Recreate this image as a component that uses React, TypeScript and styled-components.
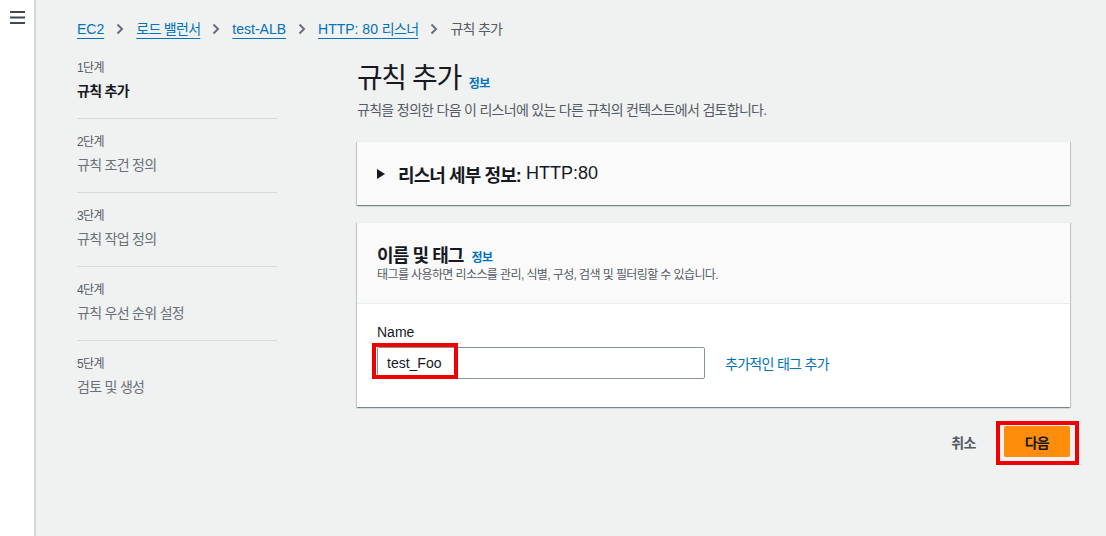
import React from 'react'
import styled, { createGlobalStyle } from 'styled-components'

// Hangul in the reference is set in a narrower face than Noto CJK
const hangul = `letter-spacing: -0.05em;`

const GlobalStyle = createGlobalStyle`
    html, body {
        margin: 0;
        padding: 0;
        height: 100%;
    }
    body {
        font-family: "Liberation Sans", "Noto Sans CJK KR", sans-serif;
        color: #16191f;
        background: #f0f1f1;
    }
`

const Page = styled.div`
    display: flex;
    min-height: 100vh;
`

const NavRail = styled.div`
    width: 36px;
    flex-shrink: 0;
    background: #ffffff;
    border-right: 2px solid #d3d6d6;
    display: flex;
    justify-content: center;
    padding-top: 11px;
    box-sizing: border-box;
`

const Main = styled.main`
    flex: 1;
    padding: 18px 36px 0 41px;
`

const Breadcrumbs = styled.nav`
    display: flex;
    align-items: center;
    font-size: 14px;
    line-height: 22px;
`

const Crumb = styled.a`
    color: #0073bb;
    text-decoration: underline;
    text-underline-offset: 4px;
    text-decoration-thickness: 1px;
`

const Ko = styled.span`
    ${hangul}
`

const CrumbCurrent = styled.span`
    color: #545b64;
    ${hangul}
`

const Chevron = styled.span`
    display: flex;
    align-items: center;
    padding: 0 12px;
    color: #687078;
`

const Layout = styled.div`
    display: grid;
    grid-template-columns: 200px 1fr;
    column-gap: 80px;
    margin-top: 19px;
`

const Steps = styled.ol`
    list-style: none;
    margin: 1px 0 0;
    padding: 0;
`

const Step = styled.li`
    padding: 15px 0 16px;
    border-bottom: 1px solid #d5dbdb;

    &:first-child {
        padding-top: 0;
    }
    &:last-child {
        border-bottom: none;
    }
`

const StepLabel = styled.div`
    font-size: 12px;
    line-height: 16px;
    color: #545b64;
    margin-bottom: 4px;
    ${hangul}
`

const StepTitle = styled.div<{ active?: boolean }>`
    font-size: 14px;
    line-height: 22px;
    color: ${p => (p.active ? '#16191f' : '#687078')};
    font-weight: ${p => (p.active ? 700 : 400)};
    ${hangul}
`

const Content = styled.section`
    display: flex;
    flex-direction: column;
`

const TitleRow = styled.div`
    display: flex;
    align-items: baseline;
    margin-top: 2px;
`

const PageTitle = styled.h1`
    margin: 0;
    font-size: 28px;
    line-height: 36px;
    font-weight: 400;
    color: #16191f;
    ${hangul}
`

const InfoLink = styled.a`
    margin-left: 8px;
    font-size: 12px;
    font-weight: 700;
    color: #0073bb;
    ${hangul}
`

const PageDesc = styled.p`
    margin: 2px 0 20px;
    font-size: 14px;
    line-height: 22px;
    color: #545b64;
    ${hangul}
`

const Card = styled.div`
    background: #ffffff;
    box-shadow: 0 1px 1px 0 rgba(0, 28, 36, 0.3), 1px 1px 1px 0 rgba(0, 28, 36, 0.15),
        -1px 1px 1px 0 rgba(0, 28, 36, 0.15);
    border-top: 1px solid #eaeded;
    margin-bottom: 17px;
`

const ExpandHeader = styled.div`
    display: flex;
    align-items: center;
    height: 63px;
    padding: 0 20px;
    background: #fafafa;
    font-size: 18px;
`

const Caret = styled.span`
    display: flex;
    width: 21px;
`

const Bold = styled.span`
    font-weight: 700;
    margin-right: 5px;
    ${hangul}
`

const CardHeader = styled.div`
    background: #fafafa;
    padding: 22px 20px 20px;
    border-bottom: 1px solid #eaeded;
`

const CardTitleRow = styled.div`
    display: flex;
    align-items: baseline;
`

const CardTitle = styled.h2`
    margin: 0;
    font-size: 18px;
    line-height: 22px;
    font-weight: 700;
    ${hangul}
`

const CardDesc = styled.div`
    font-size: 12px;
    line-height: 16px;
    color: #545b64;
    ${hangul}
`

const CardBody = styled.div`
    padding: 17px 20px 28px;
`

const FieldLabel = styled.label`
    display: block;
    font-size: 14px;
    line-height: 22px;
    color: #16191f;
    margin-bottom: 4px;
`

const FieldRow = styled.div`
    display: flex;
    align-items: center;
    gap: 20px;
`

const InputWrap = styled.div`
    position: relative;
`

const TextInput = styled.input`
    width: 328px;
    height: 32px;
    box-sizing: border-box;
    border: 1px solid #879596;
    border-radius: 2px;
    padding: 0 9px;
    font-family: inherit;
    font-size: 14px;
    color: #16191f;
    background: #fff;
`

// red annotation frames drawn over the screenshot
const Highlight = styled.span<{ inset: string }>`
    position: absolute;
    inset: ${p => p.inset};
    box-sizing: border-box;
    border: 4px solid #f00000;
    pointer-events: none;
`

const TextLink = styled.a`
    font-size: 14px;
    color: #0073bb;
    ${hangul}
`

const Actions = styled.div`
    display: flex;
    justify-content: flex-end;
    align-items: center;
    gap: 8px;
    margin-top: 2px;
`

const LinkButton = styled.button`
    background: none;
    border: none;
    padding: 4px 20px;
    font-family: inherit;
    font-size: 14px;
    font-weight: 700;
    color: #545b64;
    ${hangul}
`

const PrimaryWrap = styled.span`
    position: relative;
    display: inline-flex;
`

const PrimaryButton = styled.button`
    height: 31px;
    padding: 0 21px;
    border: none;
    border-radius: 2px;
    background: #ff8c0a;
    font-family: inherit;
    font-size: 14px;
    font-weight: 700;
    color: #16191f;
    ${hangul}
`

const steps = [
    { label: '1단계', title: '규칙 추가', active: true },
    { label: '2단계', title: '규칙 조건 정의' },
    { label: '3단계', title: '규칙 작업 정의' },
    { label: '4단계', title: '규칙 우선 순위 설정' },
    { label: '5단계', title: '검토 및 생성' },
]

const crumbs: React.ReactNode[] = [
    'EC2',
    <Ko key="lb">로드 밸런서</Ko>,
    'test-ALB',
    <React.Fragment key="l">
        HTTP: 80 <Ko>리스너</Ko>
    </React.Fragment>,
]

const ChevronIcon = () => (
    <svg width="8" height="12" viewBox="0 0 8 12">
        <path d="M1.5 1.5 L6 6 L1.5 10.5" fill="none" stroke="currentColor" strokeWidth="2" />
    </svg>
)

const Hamburger = () => (
    <svg width="15" height="13" viewBox="0 0 15 13">
        <rect x="0" y="0" width="15" height="2" fill="#414750" />
        <rect x="0" y="5.5" width="15" height="2" fill="#414750" />
        <rect x="0" y="11" width="15" height="2" fill="#414750" />
    </svg>
)

export default function App() {
    return (
        <>
            <GlobalStyle />
            <Page>
                <NavRail>
                    <Hamburger />
                </NavRail>
                <Main>
                    <Breadcrumbs>
                        {crumbs.map((c, i) => (
                            <React.Fragment key={i}>
                                <Crumb>{c}</Crumb>
                                <Chevron>
                                    <ChevronIcon />
                                </Chevron>
                            </React.Fragment>
                        ))}
                        <CrumbCurrent>규칙 추가</CrumbCurrent>
                    </Breadcrumbs>

                    <Layout>
                        <Steps>
                            {steps.map(s => (
                                <Step key={s.label}>
                                    <StepLabel>{s.label}</StepLabel>
                                    <StepTitle active={s.active}>{s.title}</StepTitle>
                                </Step>
                            ))}
                        </Steps>

                        <Content>
                            <TitleRow>
                                <PageTitle>규칙 추가</PageTitle>
                                <InfoLink>정보</InfoLink>
                            </TitleRow>
                            <PageDesc>
                                규칙을 정의한 다음 이 리스너에 있는 다른 규칙의 컨텍스트에서 검토합니다.
                            </PageDesc>

                            <Card>
                                <ExpandHeader>
                                    <Caret>
                                        <svg width="8" height="10" viewBox="0 0 8 10">
                                            <path d="M0 0 L8 5 L0 10 Z" fill="#16191f" />
                                        </svg>
                                    </Caret>
                                    <Bold>리스너 세부 정보:</Bold>
                                    HTTP:80
                                </ExpandHeader>
                            </Card>

                            <Card>
                                <CardHeader>
                                    <CardTitleRow>
                                        <CardTitle>이름 및 태그</CardTitle>
                                        <InfoLink>정보</InfoLink>
                                    </CardTitleRow>
                                    <CardDesc>
                                        태그를 사용하면 리소스를 관리, 식별, 구성, 검색 및 필터링할 수 있습니다.
                                    </CardDesc>
                                </CardHeader>
                                <CardBody>
                                    <FieldLabel>Name</FieldLabel>
                                    <FieldRow>
                                        <InputWrap>
                                            <TextInput defaultValue="test_Foo" />
                                            <Highlight inset="-4px auto 0 -5px" style={{ width: 86 }} />
                                        </InputWrap>
                                        <TextLink>추가적인 태그 추가</TextLink>
                                    </FieldRow>
                                </CardBody>
                            </Card>

                            <Actions>
                                <LinkButton>취소</LinkButton>
                                <PrimaryWrap>
                                    <PrimaryButton>다음</PrimaryButton>
                                    <Highlight inset="-5px -9px -8px -8px" />
                                </PrimaryWrap>
                            </Actions>
                        </Content>
                    </Layout>
                </Main>
            </Page>
        </>
    )
}
